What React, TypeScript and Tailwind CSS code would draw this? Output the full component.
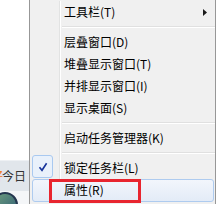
import React from "react";

type Item =
  | { kind: "sep" }
  | { kind: "row"; label: string; sub?: boolean; checked?: boolean; hot?: boolean };

const items: Item[] = [
  { kind: "row", label: "工具栏(T)", sub: true },
  { kind: "sep" },
  { kind: "row", label: "层叠窗口(D)" },
  { kind: "row", label: "堆叠显示窗口(T)" },
  { kind: "row", label: "并排显示窗口(I)" },
  { kind: "row", label: "显示桌面(S)" },
  { kind: "sep" },
  { kind: "row", label: "启动任务管理器(K)" },
  { kind: "sep" },
  { kind: "row", label: "锁定任务栏(L)", checked: true },
  { kind: "row", label: "属性(R)", hot: true },
];

const Gutter = ({ children }: { children?: React.ReactNode }) => (
  <>
    <div className="relative flex h-full w-[29px] shrink-0 items-center justify-center">
      {children}
    </div>
    <div className="h-full w-[2px] shrink-0 border-l border-[#e2e3e3] bg-white" />
  </>
);

const MenuRow = ({ item }: { item: Extract<Item, { kind: "row" }> }) => (
  <div className="relative flex h-[22px] items-center">
    {item.hot && (
      <div className="absolute left-[2px] right-[1px] top-0 bottom-[-1px] rounded-[3px] border border-[#aecbef] bg-gradient-to-b from-[#f2f6fc] to-[#e3ebf7]" />
    )}
    <Gutter>
      {item.checked && (
        <div className="absolute left-[2px] top-[-2px] flex h-[23px] w-[21px] items-center justify-center rounded-[3px] border border-[#a9c9f0] bg-[#e9f1fb]">
          <svg width="10" height="10" viewBox="0 0 10 10">
            <path d="M1.5 5.2 L4 8.3 L8.6 1.2" fill="none" stroke="#16339a" strokeWidth="1.6" />
          </svg>
        </div>
      )}
    </Gutter>
    <div className="relative flex-1 pl-[3px] text-[12px] leading-none text-black">{item.label}</div>
    {item.sub && (
      <svg className="relative mr-[8px]" width="4" height="7" viewBox="0 0 4 7">
        <path d="M0 0 L4 3.5 L0 7 Z" fill="#1a1a1a" />
      </svg>
    )}
    {item.hot && (
      <div className="absolute left-[19px] top-0 h-[24px] w-[92px] border-[3px] border-[#e8252f]" />
    )}
  </div>
);

const Separator = () => (
  <div className="flex h-[8px] items-center">
    <Gutter />
    <div className="flex-1 pl-[1px]">
      <div className="h-[1px] bg-[#e0e0e0]" />
      <div className="h-[1px] bg-white" />
    </div>
  </div>
);

export default function App() {
  return (
    <div className="flex h-[204px] w-[219px] overflow-hidden bg-white font-['Noto_Sans_CJK_SC',sans-serif]">
      <div className="flex w-[29px] shrink-0 flex-col">
        <div className="h-[160px] shrink-0 bg-white" />
        <div className="flex h-[31px] shrink-0 items-center overflow-hidden border-t border-[#eef1f4] bg-[#e1e6eb] text-[12px] leading-none">
          <span className="ml-[-9px] text-[#f07a1c]">好</span>
          <span className="ml-[-1px] whitespace-nowrap text-[#333]">今日</span>
        </div>
        <div className="relative flex-1 overflow-hidden bg-[#f4f6f8]">
          <div className="ml-[-8px] mt-[1px] h-[26px] w-[26px] rounded-full border-2 border-[#24364f] bg-gradient-to-br from-[#6f9d7c] to-[#2f5d74]" />
        </div>
      </div>
      <div className="w-[187px] shrink-0 border-x border-[#979797] bg-[#f0f0f0] pt-[1px]">
        {items.map((it, i) =>
          it.kind === "sep" ? <Separator key={i} /> : <MenuRow key={i} item={it} />
        )}
      </div>
      <div className="flex-1 bg-white" />
    </div>
  );
}
